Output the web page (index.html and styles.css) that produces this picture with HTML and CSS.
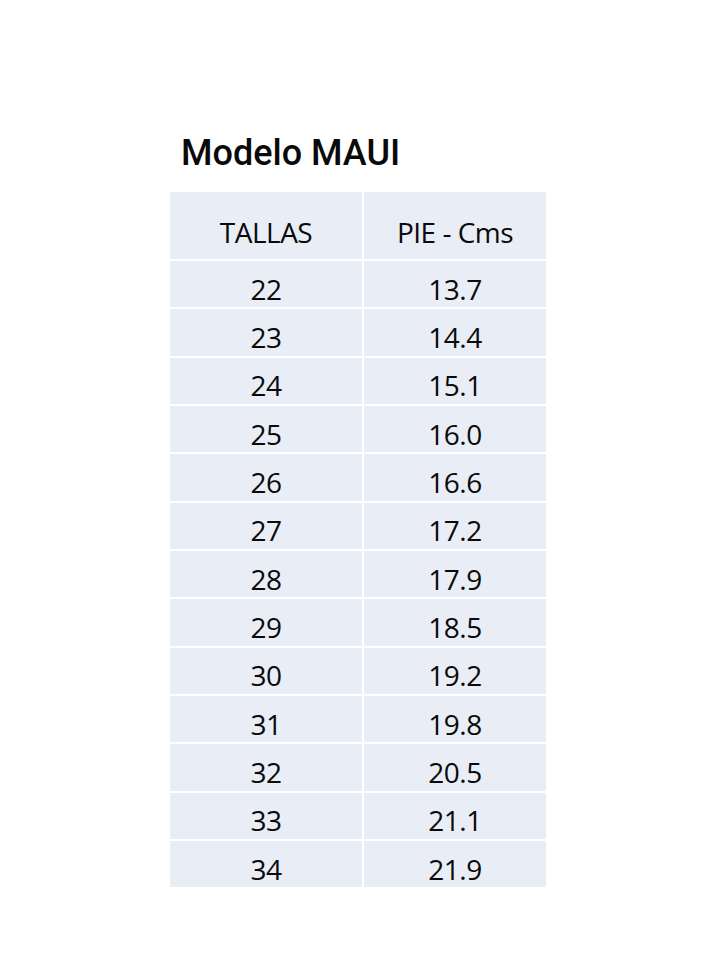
FILE: index.html
```html
<!DOCTYPE html>
<html lang="es">
<head>
<meta charset="utf-8">
<title>Modelo MAUI</title>
<link rel="stylesheet" href="styles.css">
</head>
<body>
<main class="page">
  <h1 class="title">Modelo MAUI</h1>
  <div class="table">
    <div class="cell head">TALLAS</div>
    <div class="cell head">PIE - Cms</div>
    <div class="cell">22</div><div class="cell">13.7</div>
    <div class="cell">23</div><div class="cell">14.4</div>
    <div class="cell">24</div><div class="cell">15.1</div>
    <div class="cell">25</div><div class="cell">16.0</div>
    <div class="cell">26</div><div class="cell">16.6</div>
    <div class="cell">27</div><div class="cell">17.2</div>
    <div class="cell">28</div><div class="cell">17.9</div>
    <div class="cell">29</div><div class="cell">18.5</div>
    <div class="cell">30</div><div class="cell">19.2</div>
    <div class="cell">31</div><div class="cell">19.8</div>
    <div class="cell">32</div><div class="cell">20.5</div>
    <div class="cell">33</div><div class="cell">21.1</div>
    <div class="cell">34</div><div class="cell">21.9</div>
  </div>
</main>
</body>
</html>
```
FILE: styles.css
```css
html, body {
  margin: 0;
  padding: 0;
  background: #ffffff;
}
.page {
  width: 376px;
  margin-left: 170px;
  padding-top: 131px;
}
.title {
  margin: 0 0 0 11px;
  font-family: Roboto, "Liberation Sans", sans-serif;
  font-weight: 500;
  font-size: 36px;
  line-height: 44px;
  color: #0a0a0a;
  height: 61px;
}
.table {
  display: grid;
  grid-template-columns: 192px 182px;
  grid-template-rows: 67px repeat(13, 46.33px);
  column-gap: 2px;
  row-gap: 2px;
  background: #ffffff;
}
.cell {
  background: #e9edf5;
  display: flex;
  align-items: center;
  justify-content: center;
  box-sizing: border-box;
  padding-top: 9px;
  font-family: "Open Sans", "Noto Sans", sans-serif;
  font-size: 28px;
  letter-spacing: -0.5px;
  line-height: 1;
  color: #0a0a0a;
}
.head {
  padding-top: 12px;
}
```
